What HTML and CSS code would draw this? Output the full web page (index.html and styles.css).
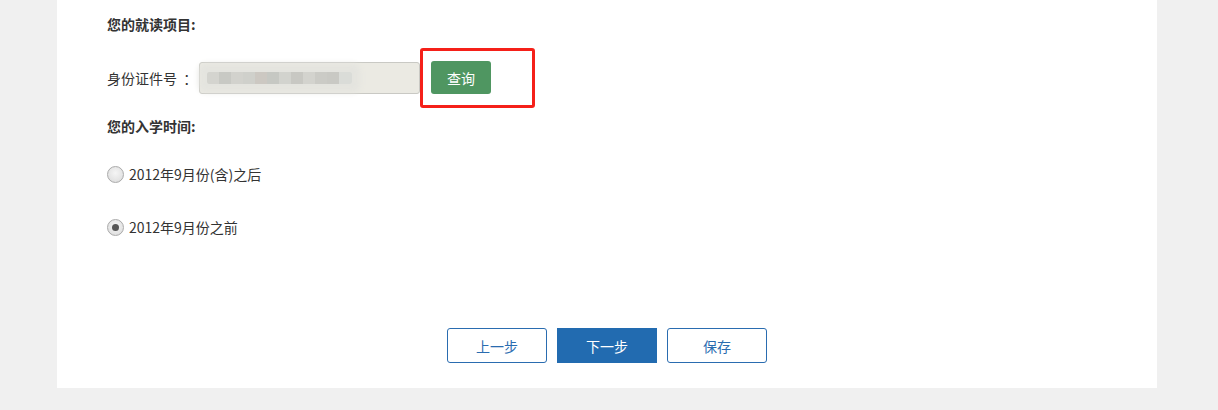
FILE: index.html
```html
<!DOCTYPE html>
<html lang="zh-CN">
<head>
    <meta charset="UTF-8">
    <title>入学信息</title>
    <link rel="stylesheet" href="styles.css">
</head>
<body>
    <div class="card">
        <h3 class="section-title">您的就读项目:</h3>

        <!-- 身份证查询 -->
        <div class="id-row">
            <label class="id-label">身份证件号&nbsp;&nbsp;：</label>
            <div class="id-field"><span class="blurred"></span></div>
            <div class="query-wrap">
                <button type="button" class="btn-query">查询</button>
                <span class="mark"></span>
            </div>
        </div>

        <h3 class="section-title title-time">您的入学时间:</h3>

        <label class="option option-first">
            <input type="radio" name="enroll">
            <span>2012年9月份(含)之后</span>
        </label>
        <label class="option">
            <input type="radio" name="enroll" checked>
            <span>2012年9月份之前</span>
        </label>

        <div class="actions">
            <button type="button" class="btn btn-outline">上一步</button>
            <button type="button" class="btn btn-primary">下一步</button>
            <button type="button" class="btn btn-outline">保存</button>
        </div>
    </div>
</body>
</html>
```

FILE: styles.css
```css
body {
    margin: 0;
    background-color: #f0f0f0;
    font-family: "Noto Sans CJK SC", "Noto Sans", sans-serif;
    font-size: 14px;
    color: #333;
}

.card {
    width: 1000px;
    height: 374px;
    margin-left: 57px;
    padding: 14px 50px 0;
    background-color: #fff;
}

.section-title {
    margin: 0;
    font-size: 14px;
    line-height: 20px;
    font-weight: bold;
    color: #333;
}

.title-time {
    margin-top: 22px;
}

.id-row {
    display: flex;
    align-items: center;
    margin-top: 27px;
    height: 33px;
}

.id-label {
    width: 92px;
    line-height: 20px;
    white-space: nowrap;
}

.id-field {
    width: 212px;
    height: 30px;
    border: 1px solid #c9c9c4;
    border-radius: 3px;
    background-color: #ebeae3;
    display: flex;
    align-items: center;
    padding-left: 7px;
}

/* blurred (mosaic) id number */
.blurred {
    display: block;
    width: 145px;
    height: 12px;
    border-radius: 2px;
    box-shadow: 0 0 6px 8px #e4e4df;
    background: linear-gradient(to right,
        #d4d4cf 0 12px, #c8c9c4 12px 24px, #d2d2cd 24px 36px, #cfd0cb 36px 48px,
        #ccc8c2 48px 60px, #c6c8c3 60px 72px, #d2d3ce 72px 84px, #c8c8c3 84px 96px,
        #d3d3ce 96px 108px, #cbcbc6 108px 120px, #c9c9c4 120px 132px, #dadcd8 132px 145px);
}

.query-wrap {
    position: relative;
    margin-left: 11px;
}

.btn-query {
    display: block;
    width: 60px;
    height: 33px;
    border: none;
    border-radius: 3px;
    background-color: #4f9661;
    color: #fff;
    font-family: inherit;
    font-size: 14px;
}

/* red annotation box */
.mark {
    position: absolute;
    left: -11px;
    top: -13px;
    width: 109px;
    height: 54px;
    border: 3px solid #f52019;
    border-radius: 3px;
}

.option {
    display: flex;
    align-items: center;
    line-height: 20px;
    margin-top: 33px;
}

.option-first {
    margin-top: 28px;
}

.option input[type="radio"] {
    appearance: none;
    width: 17px;
    height: 17px;
    margin: 0 5px 0 0;
    border: 1px solid #aaa;
    border-radius: 50%;
    background: radial-gradient(circle at 50% 40%, #f5f5f5 0, #e2e2e2 70%, #d5d5d5 100%);
    box-sizing: border-box;
    position: relative;
}

.option input[type="radio"]:checked::after {
    content: "";
    position: absolute;
    left: 4px;
    top: 4px;
    width: 7px;
    height: 7px;
    border-radius: 50%;
    background-color: #555;
}

.actions {
    display: flex;
    justify-content: center;
    gap: 10px;
    margin-top: 91px;
    margin-left: -50px;
    margin-right: -50px;
}

.btn {
    width: 100px;
    height: 35px;
    font-family: inherit;
    font-size: 14px;
    box-sizing: border-box;
    cursor: pointer;
}

.btn-outline {
    background-color: #fff;
    border: 1px solid #2a6cb0;
    border-radius: 3px;
    color: #2a6cb0;
}

.btn-primary {
    background-color: #226bb0;
    border: none;
    color: #fff;
}
```
